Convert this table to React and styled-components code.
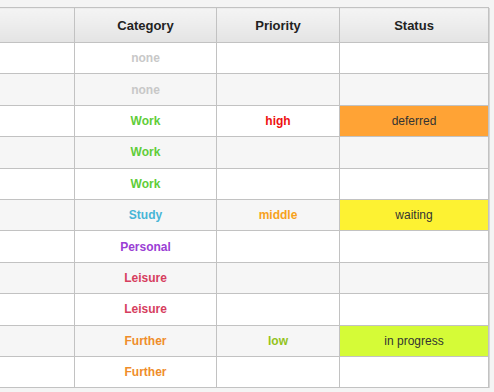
import React from 'react';
import styled, { createGlobalStyle } from 'styled-components';

const GlobalStyle = createGlobalStyle`
  body {
    margin: 0;
    background: #f4f4f4;
    font-family: "Liberation Sans", Arial, sans-serif;
  }
`;

const Page = styled.div`
  padding-top: 7px;
  margin-left: -21px;
`;

const Table = styled.table`
  border-collapse: collapse;
  table-layout: fixed;
  width: 509px;
  background: #fff;
  box-shadow: 1px 1px 0 #d6d6d6;
`;

const Th = styled.th`
  height: 34px;
  padding: 0;
  border: 1px solid #c2c2c2;
  background: linear-gradient(#f4f4f4, #e4e4e4);
  color: #222;
  font-size: 13px;
  font-weight: bold;
  text-align: center;
`;

const Row = styled.tr`
  background: ${(p) => (p.$odd ? '#f6f6f6' : '#fff')};
`;

const Td = styled.td`
  height: 30.4px;
  padding: 0;
  border: 1px solid #c2c2c2;
  text-align: center;
  font-size: 12px;
  font-weight: ${(p) => (p.$bold ? 'bold' : 'normal')};
  color: ${(p) => p.$color || '#333'};
  background: ${(p) => p.$bg || 'transparent'};
`;

const categoryColors = {
  none: '#c8c8c8',
  Work: '#5fcd3a',
  Study: '#47b5d6',
  Personal: '#9a40d4',
  Leisure: '#d63e5e',
  Further: '#ef8d2b',
};

const priorityColors = {
  high: '#ee1111',
  middle: '#f7a21c',
  low: '#93c31c',
};

const statusColors = {
  deferred: '#ffa335',
  waiting: '#fdf232',
  'in progress': '#d5fb37',
};

const rows = [
  { category: 'none' },
  { category: 'none' },
  { category: 'Work', priority: 'high', status: 'deferred' },
  { category: 'Work' },
  { category: 'Work' },
  { category: 'Study', priority: 'middle', status: 'waiting' },
  { category: 'Personal' },
  { category: 'Leisure' },
  { category: 'Leisure' },
  { category: 'Further', priority: 'low', status: 'in progress' },
  { category: 'Further' },
];

const App = () => (
  <Page>
    <GlobalStyle />
    <Table>
      <colgroup>
        <col style={{ width: 95 }} />
        <col style={{ width: 142 }} />
        <col style={{ width: 123 }} />
        <col style={{ width: 149 }} />
      </colgroup>
      <thead>
        <tr>
          <Th />
          <Th>Category</Th>
          <Th>Priority</Th>
          <Th>Status</Th>
        </tr>
      </thead>
      <tbody>
        {rows.map((r, i) => (
          <Row key={i} $odd={i % 2 === 1}>
            <Td />
            <Td $bold $color={categoryColors[r.category]}>{r.category}</Td>
            <Td $bold $color={priorityColors[r.priority]}>{r.priority}</Td>
            <Td $bg={statusColors[r.status]}>{r.status}</Td>
          </Row>
        ))}
      </tbody>
    </Table>
  </Page>
);

export default App;
